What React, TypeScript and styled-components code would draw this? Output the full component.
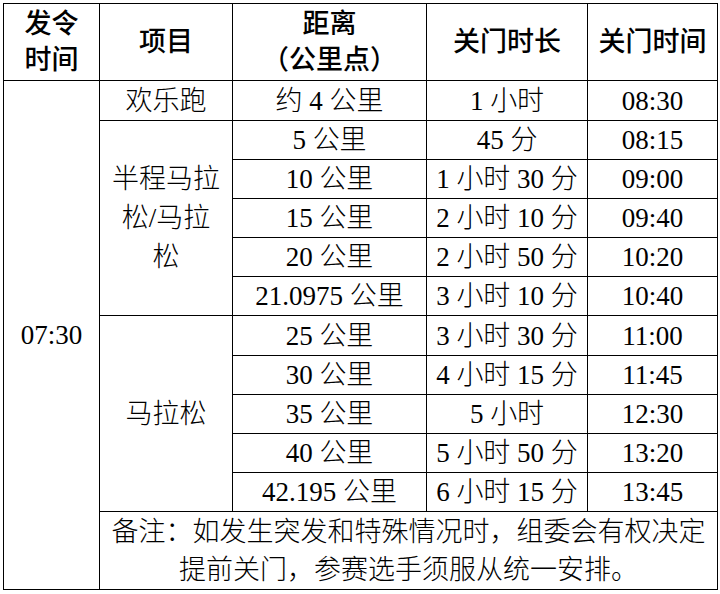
import React from "react";
import styled, { createGlobalStyle } from "styled-components";

const Global = createGlobalStyle`
  html, body { margin: 0; padding: 0; background: #ffffff; }
  body { padding: 3px 0 0 3px; }
`;

const Table = styled.table`
  border-collapse: collapse;
  table-layout: fixed;
  width: 714px;
  font-family: "Liberation Serif", "Noto Sans CJK SC", serif;
  font-size: 27px;
  font-weight: 300;
  color: #000;
  line-height: 32px;
`;

const Cell = styled.td<{ $head?: boolean; $lh?: number }>`
  border: 1px solid #000;
  padding: 0 2px;
  text-align: center;
  vertical-align: middle;
  white-space: nowrap;
  font-weight: ${(p) => (p.$head ? 500 : 300)};
  line-height: ${(p) => (p.$head ? 36 : p.$lh ?? 30)}px;
`;

const Row = styled.tr<{ $h: number }>`
  height: ${(p) => p.$h}px;
`;

const Note = styled.td`
  border: 1px solid #000;
  padding: 0 4px;
  text-align: center;
  vertical-align: middle;
  white-space: nowrap;
  line-height: 38px;
`;

type R = { dist: string; dur: string; close: string; h: number };

const half: R[] = [
  { dist: "5 公里", dur: "45 分", close: "08:15", h: 39 },
  { dist: "10 公里", dur: "1 小时 30 分", close: "09:00", h: 39 },
  { dist: "15 公里", dur: "2 小时 10 分", close: "09:40", h: 39 },
  { dist: "20 公里", dur: "2 小时 50 分", close: "10:20", h: 39 },
  { dist: "21.0975 公里", dur: "3 小时 10 分", close: "10:40", h: 39 },
];

const full: R[] = [
  { dist: "25 公里", dur: "3 小时 30 分", close: "11:00", h: 40 },
  { dist: "30 公里", dur: "4 小时 15 分", close: "11:45", h: 39 },
  { dist: "35 公里", dur: "5 小时", close: "12:30", h: 39 },
  { dist: "40 公里", dur: "5 小时 50 分", close: "13:20", h: 39 },
  { dist: "42.195 公里", dur: "6 小时 15 分", close: "13:45", h: 39 },
];

export default function App() {
  return (
    <>
      <Global />
      <Table>
        <colgroup>
          <col style={{ width: 96 }} />
          <col style={{ width: 133 }} />
          <col style={{ width: 194 }} />
          <col style={{ width: 161 }} />
          <col style={{ width: 130 }} />
        </colgroup>
        <tbody>
          <Row $h={77}>
            <Cell $head>
              发令
              <br />
              时间
            </Cell>
            <Cell $head>项目</Cell>
            <Cell $head>
              距离
              <br />
              （公里点）
            </Cell>
            <Cell $head>关门时长</Cell>
            <Cell $head>关门时间</Cell>
          </Row>
          <Row $h={40}>
            <Cell rowSpan={12}>07:30</Cell>
            <Cell>欢乐跑</Cell>
            <Cell>约 4 公里</Cell>
            <Cell>1 小时</Cell>
            <Cell>08:30</Cell>
          </Row>
          {half.map((r, i) => (
            <Row $h={r.h} key={r.dist}>
              {i === 0 && (
                <Cell rowSpan={5} $lh={39}>
                  半程马拉
                  <br />
                  松/马拉
                  <br />
                  松
                </Cell>
              )}
              <Cell>{r.dist}</Cell>
              <Cell>{r.dur}</Cell>
              <Cell>{r.close}</Cell>
            </Row>
          ))}
          {full.map((r, i) => (
            <Row $h={r.h} key={r.dist}>
              {i === 0 && <Cell rowSpan={5}>马拉松</Cell>}
              <Cell>{r.dist}</Cell>
              <Cell>{r.dur}</Cell>
              <Cell>{r.close}</Cell>
            </Row>
          ))}
          <Row $h={78}>
            <Note colSpan={4}>
              备注：如发生突发和特殊情况时，组委会有权决定
              <br />
              提前关门，参赛选手须服从统一安排。
            </Note>
          </Row>
        </tbody>
      </Table>
    </>
  );
}
